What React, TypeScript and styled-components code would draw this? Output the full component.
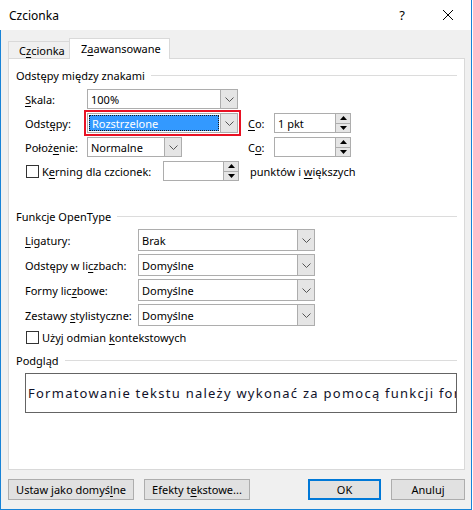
import styled, { createGlobalStyle } from 'styled-components';

const GlobalStyle = createGlobalStyle`
  html, body { margin: 0; padding: 0; background: #fff; }
  body {
    font-family: 'Noto Sans', 'Liberation Sans', sans-serif;
    font-size: 11px;
    color: #000;
  }
  * { box-sizing: border-box; }
`;

const Window = styled.div`
  width: 472px;
  height: 510px;
  display: flex;
  flex-direction: column;
  border-right: 1px solid #1883d7;
  border-bottom: 1px solid #1883d7;
  background: #fff;
`;

const TitleBar = styled.div`
  height: 30px;
  display: flex;
  align-items: center;
  padding-left: 9px;
  background: #fff;
`;

const Title = styled.div`
  flex: 1;
  font-size: 12px;
`;

const CaptionButton = styled.div`
  width: 46px;
  height: 30px;
  display: flex;
  align-items: center;
  justify-content: center;
  font-size: 13px;
`;

const Body = styled.div`
  flex: 1;
  display: flex;
  flex-direction: column;
  background: #f0f0f0;
  border-left: 1px solid #1883d7;
  padding: 8px 6px 9px 7px;
`;

const TabStrip = styled.div`
  height: 21px;
  margin-bottom: -1px;
  display: flex;
  align-items: flex-end;
  position: relative;
  z-index: 1;
`;

const Tab = styled.div<{ $active?: boolean }>`
  height: ${(p) => (p.$active ? 21 : 18)}px;
  width: ${(p) => (p.$active ? 101 : 61)}px;
  display: flex;
  align-items: center;
  padding-left: ${(p) => (p.$active ? 11 : 10)}px;
  padding-bottom: ${(p) => (p.$active ? 1 : 0)}px;
  background: ${(p) => (p.$active ? '#fff' : '#f0f0f0')};
  border: 1px solid #d9d9d9;
  border-bottom: ${(p) => (p.$active ? 'none' : '1px solid #d9d9d9')};
  border-right: ${(p) => (p.$active ? '1px solid #d9d9d9' : 'none')};
`;

const Panel = styled.div`
  flex: 1;
  background: #fff;
  border: 1px solid #d9d9d9;
  display: flex;
  flex-direction: column;
  padding: 8px 7px 0 0;
`;

const GroupHeader = styled.div<{ $top?: number }>`
  height: 16px;
  margin-top: ${(p) => p.$top ?? 0}px;
  display: flex;
  align-items: center;
  padding-left: 7px;
  white-space: nowrap;

  &::after {
    content: '';
    flex: 1;
    height: 1px;
    margin-left: 6px;
    background: #dcdcdc;
  }
`;

const Rows = styled.div<{ $gap: number; $top: number }>`
  display: flex;
  flex-direction: column;
  gap: ${(p) => p.$gap}px;
  margin-top: ${(p) => p.$top}px;
  padding-left: 16px;
`;

const Row = styled.div<{ $h: number }>`
  height: ${(p) => p.$h}px;
  display: flex;
  align-items: center;
`;

const Label = styled.div<{ $w: number; $left?: number }>`
  width: ${(p) => p.$w}px;
  margin-left: ${(p) => p.$left ?? 0}px;
  white-space: nowrap;
`;

const Key = styled.span`
  text-decoration: underline;
  text-underline-offset: 2px;
`;

const ComboBox = styled.div<{ $w: number; $h: number }>`
  width: ${(p) => p.$w}px;
  height: ${(p) => p.$h}px;
  display: flex;
  border: 1px solid #adadad;
  background: #fff;
`;

const ComboValue = styled.div<{ $selected?: boolean }>`
  flex: 1;
  display: flex;
  align-items: center;
  padding-left: 3px;
  margin: ${(p) => (p.$selected ? '1px' : '0')};
  background: ${(p) => (p.$selected ? '#3399ff' : 'transparent')};
  color: ${(p) => (p.$selected ? '#fff' : '#000')};
  outline: ${(p) => (p.$selected ? '1px dotted #1a1a1a' : 'none')};
  outline-offset: -1px;
`;

const ComboButton = styled.div`
  width: 17px;
  display: flex;
  align-items: center;
  justify-content: center;
  background: #e5e5e5;
  border-left: 1px solid #adadad;
`;

const FocusRing = styled.div`
  margin: -3px;
  padding: 1px;
  border: 2px solid #e81123;
`;

const Spinner = styled.div<{ $w: number }>`
  width: ${(p) => p.$w}px;
  height: 20px;
  display: flex;
  border: 1px solid #adadad;
  background: #fff;
`;

const SpinValue = styled.div`
  flex: 1;
  display: flex;
  align-items: center;
  padding-left: 3px;
`;

const SpinButtons = styled.div`
  width: 15px;
  display: flex;
  flex-direction: column;
  border-left: 1px solid #adadad;
  background: #e5e5e5;
`;

const SpinHalf = styled.div<{ $top?: boolean }>`
  flex: 1;
  display: flex;
  align-items: center;
  justify-content: center;
  border-bottom: ${(p) => (p.$top ? '1px solid #adadad' : 'none')};
`;

const Checkbox = styled.div`
  width: 13px;
  height: 13px;
  margin-left: 1px;
  margin-right: 3px;
  border: 1px solid #333;
  background: #fff;
  flex-shrink: 0;
`;

const Text = styled.div<{ $left?: number }>`
  margin-left: ${(p) => p.$left ?? 0}px;
  white-space: nowrap;
`;

const Preview = styled.div`
  height: 40px;
  margin: 5px 0 0 16px;
  border: 1px solid #646464;
  display: flex;
  align-items: center;
  padding-left: 2px;
  overflow: hidden;
  white-space: nowrap;
  font-size: 13px;
  letter-spacing: 1.25px;
  color: #10122a;
`;

const ButtonBar = styled.div`
  height: 21px;
  margin-top: 9px;
  display: flex;
  gap: 10px;
`;

const Button = styled.div<{ $w: number; $default?: boolean }>`
  width: ${(p) => p.$w}px;
  height: 21px;
  display: flex;
  align-items: center;
  justify-content: center;
  background: #e1e1e1;
  border: ${(p) => (p.$default ? '2px solid #0078d7' : '1px solid #adadad')};
  white-space: nowrap;
`;

const Spacer = styled.div`
  flex: 1;
`;

const Chevron = () => (
  <svg width="9" height="5" viewBox="0 0 9 5">
    <polyline points="0.5,0.5 4.5,4.5 8.5,0.5" fill="none" stroke="#555" strokeWidth="1" />
  </svg>
);

const Arrow = ({ up }: { up?: boolean }) => (
  <svg width="7" height="4" viewBox="0 0 7 4">
    <polygon points={up ? '0,4 7,4 3.5,0' : '0,0 7,0 3.5,4'} fill="#000" />
  </svg>
);

const Combo = ({
  value,
  w,
  h = 20,
  selected,
}: {
  value: string;
  w: number;
  h?: number;
  selected?: boolean;
}) => (
  <ComboBox $w={w} $h={h}>
    <ComboValue $selected={selected}>{value}</ComboValue>
    <ComboButton>
      <Chevron />
    </ComboButton>
  </ComboBox>
);

const Spin = ({ value, w }: { value?: string; w: number }) => (
  <Spinner $w={w}>
    <SpinValue>{value}</SpinValue>
    <SpinButtons>
      <SpinHalf $top>
        <Arrow up />
      </SpinHalf>
      <SpinHalf>
        <Arrow />
      </SpinHalf>
    </SpinButtons>
  </Spinner>
);

const openTypeRows = [
  { label: <><Key>L</Key>igatury:</>, value: 'Brak' },
  { label: <>Odstępy w li<Key>c</Key>zbach:</>, value: 'Domyślne' },
  { label: <>Formy lic<Key>z</Key>bowe:</>, value: 'Domyślne' },
  { label: <>Zestawy <Key>s</Key>tylistyczne:</>, value: 'Domyślne' },
];

export default function App() {
  return (
    <>
      <GlobalStyle />
      <Window>
        <TitleBar>
          <Title>Czcionka</Title>
          <CaptionButton>?</CaptionButton>
          <CaptionButton>
            <svg width="10" height="10" viewBox="0 0 10 10">
              <path d="M0 0 L10 10 M10 0 L0 10" stroke="#000" strokeWidth="1" />
            </svg>
          </CaptionButton>
        </TitleBar>
        <Body>
          <TabStrip>
            <Tab>
              C<Key>z</Key>cionka
            </Tab>
            <Tab $active>
              Z<Key>a</Key>awansowane
            </Tab>
          </TabStrip>
          <Panel>
            <GroupHeader>Odstępy między znakami</GroupHeader>
            <Rows $gap={4} $top={6}>
              <Row $h={20}>
                <Label $w={62}>
                  <Key>S</Key>kala:
                </Label>
                <Combo value="100%" w={151} />
              </Row>
              <Row $h={20}>
                <Label $w={62}>
                  Odst<Key>ę</Key>py:
                </Label>
                <FocusRing>
                  <Combo value="Rozstrzelone" w={151} selected />
                </FocusRing>
                <Label $w={26} $left={10}>
                  <Key>C</Key>o:
                </Label>
                <Spin value="1 pkt" w={77} />
              </Row>
              <Row $h={20}>
                <Label $w={62}>
                  Położ<Key>e</Key>nie:
                </Label>
                <Combo value="Normalne" w={95} />
                <Label $w={26} $left={66}>
                  C<Key>o</Key>:
                </Label>
                <Spin w={77} />
              </Row>
              <Row $h={20}>
                <Checkbox />
                <Label $w={121}>
                  K<Key>e</Key>rning dla czcionek:
                </Label>
                <Spin w={76} />
                <Text $left={11}>
                  punktów i <Key>w</Key>iększych
                </Text>
              </Row>
            </Rows>

            <GroupHeader $top={27}>Funkcje OpenType</GroupHeader>
            <Rows $gap={3} $top={5}>
              {openTypeRows.map((row, i) => (
                <Row $h={22} key={i}>
                  <Label $w={113}>{row.label}</Label>
                  <Combo value={row.value} w={177} h={22} />
                </Row>
              ))}
            </Rows>
            <Rows $gap={0} $top={3}>
              <Row $h={16}>
                <Checkbox />
                <Text>
                  Użyj odmian <Key>k</Key>ontekstowych
                </Text>
              </Row>
            </Rows>

            <GroupHeader $top={7}>Podgląd</GroupHeader>
            <Preview>Formatowanie tekstu należy wykonać za pomocą funkcji formatowania</Preview>
          </Panel>
          <ButtonBar>
            <Button $w={126}>
              Ustaw jako domyś<Key>l</Key>ne
            </Button>
            <Button $w={106}>
              Efekty t<Key>e</Key>kstowe...
            </Button>
            <Spacer />
            <Button $w={73} $default>
              OK
            </Button>
            <Button $w={74}>Anuluj</Button>
          </ButtonBar>
        </Body>
      </Window>
    </>
  );
}
